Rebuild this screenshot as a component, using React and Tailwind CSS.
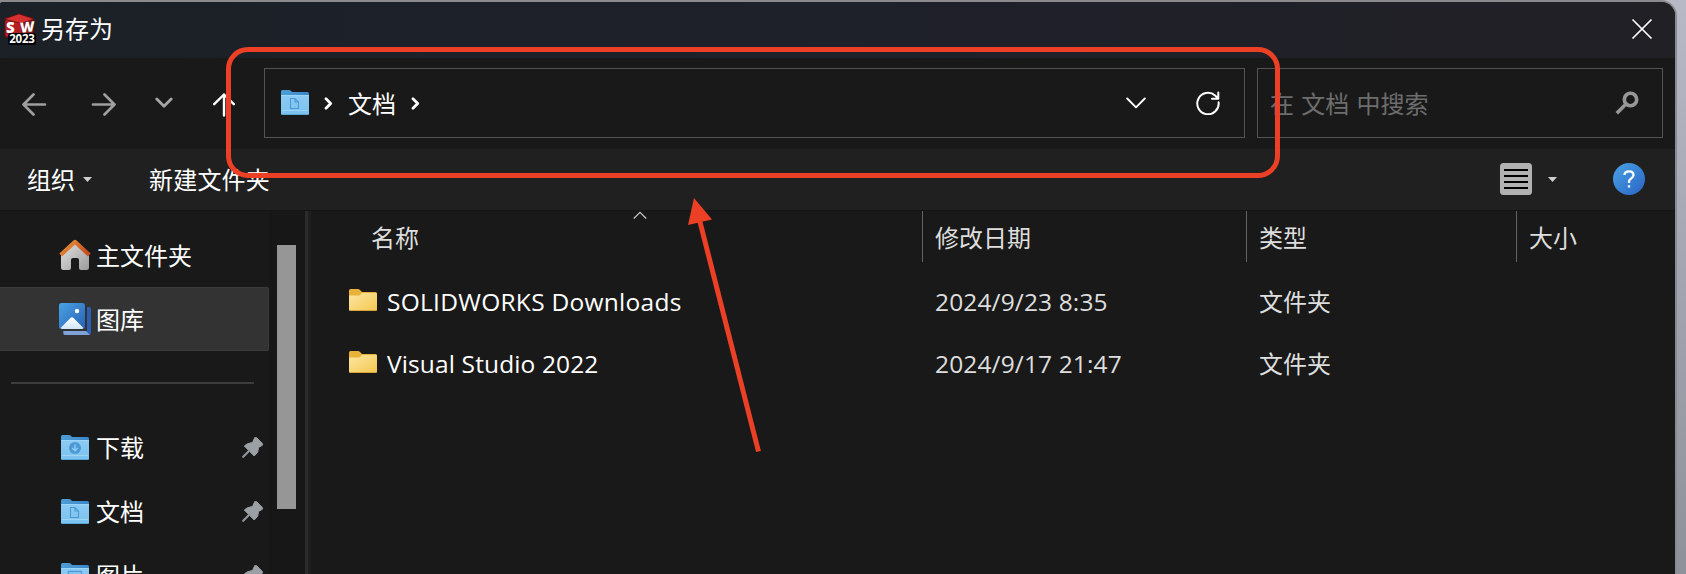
function SolidWorksLogo() {
  return (
    <span className="relative block h-8 w-8 shrink-0">
      <svg className="block h-8 w-8" viewBox="0 0 32 32">
        <path d="M.500 5 15 .500l15 4.500v18L16 27 .500 24z" fill="#5e1115" />
        <path d="M1.500 6 15 1.200l14 4.800-12 4z" fill="#d6312f" />
        <path d="M1.500 7 17 10.500V27L1.500 23z" fill="#b51f22" />
        <path d="M17 10.500 29 6.500V22L17 27z" fill="#7b1519" />
        <rect x="4" y="20" width="28" height="12" rx="3" fill="#000" />
      </svg>
      <span className="absolute left-[2px] top-[9px] h-[11px] w-[10px] font-['Open_Sans',sans-serif] text-[15px] font-extrabold leading-[11px] text-white">S</span>
      <span className="absolute left-[16px] top-[8px] h-[11px] w-[14px] -skew-y-6 font-['Open_Sans',sans-serif] text-[14px] font-extrabold leading-[11px] tracking-[-1px] text-white">W</span>
      <span className="absolute left-[5px] top-[20px] flex h-[12px] w-[26px] items-center justify-center bg-black font-['Open_Sans',sans-serif] text-[11.500px] font-bold leading-[12px] tracking-[-0.200px] text-white">2023</span>
    </span>
  );
}

function BlueFolder({ kind }) {
  return (
    <svg className="block h-[25px] w-7 shrink-0" viewBox="0 0 28 25">
      <defs>
        <linearGradient id={`front-${kind}`} x1="0" y1="0" x2="0" y2="1">
          <stop offset="0" stopColor="#8ccbf4" />
          <stop offset="1" stopColor="#7ac2ee" />
        </linearGradient>
        <linearGradient id={`back-${kind}`} x1="0" y1="0" x2="1" y2="0">
          <stop offset="0" stopColor="#4c9ed4" />
          <stop offset="1" stopColor="#3c85c8" />
        </linearGradient>
      </defs>
      <path d="M0 1.500Q0 0 1.500 0H8q1.200 0 2 .900L11.200 2H26.500Q28 2 28 3.500V12H0z" fill={`url(#back-${kind})`} />
      <path d="M0 5H28V23.500Q28 25 26.500 25H1.500Q0 25 0 23.500z" fill={`url(#front-${kind})`} />
      <path d="M0 5.500H28" stroke="#9bd5f7" />
      <path d="M1 20.500H27" stroke="#9dd5f5" />
      <path d="M1 24.500H27" stroke="#58a8d8" />
      {kind.startsWith("doc") && (
        <path d="M9.500 8.500h4.500l3.500 3.500v6.500h-8zM14 8.500V12h3.500" fill="none" stroke="#4c99d6" strokeWidth="1.100" />
      )}
      {kind === "down" && (
        <>
          <circle cx="14" cy="13" r="6" fill="#4d99d6" />
          <path d="M14 9.500v6M11.200 13l2.800 2.800L16.800 13" fill="none" stroke="#8ccbf4" strokeWidth="1.500" />
        </>
      )}
      {kind === "pic" && (
        <>
          <rect x="7.500" y="8.500" width="13" height="10" fill="none" stroke="#4c99d6" strokeWidth="1.300" />
          <circle cx="11" cy="11.500" r="1" fill="#4c99d6" />
          <path d="m9 18 4-4 4 4" fill="none" stroke="#4c99d6" />
        </>
      )}
    </svg>
  );
}

function YellowFolder() {
  return (
    <svg className="block h-[22px] w-7 shrink-0" viewBox="0 0 28 22">
      <defs>
        <linearGradient id="yf" x1="0" y1="0" x2="1" y2="1">
          <stop offset="0" stopColor="#fce6a2" />
          <stop offset="1" stopColor="#f4c850" />
        </linearGradient>
      </defs>
      <path d="M0 1.500Q0 0 1.500 0H9q1 0 1.800.800L13 3H26.500Q28 3 28 4.500V10H0z" fill="#e8b13a" />
      <path d="M0 6.500H9.500Q10.500 6.500 11.300 5.800L13 4H27q1 0 1 1V20.500Q28 22 26.500 22H1.500Q0 22 0 20.500z" fill="url(#yf)" />
      <path d="M1 21.500H27" stroke="#d9a53a" />
    </svg>
  );
}

function HomeIcon() {
  return (
    <svg className="block h-8 w-8" viewBox="0 0 32 32">
      <defs>
        <linearGradient id="wall" x1="0" y1="0" x2="1" y2="1">
          <stop offset="0" stopColor="#e4e4e4" />
          <stop offset="1" stopColor="#9b9b9b" />
        </linearGradient>
        <linearGradient id="roof" x1="0" y1="0" x2="1" y2="0.500">
          <stop offset="0" stopColor="#eb9a3a" />
          <stop offset="1" stopColor="#c94f20" />
        </linearGradient>
      </defs>
      <path d="M2 14 16 2 30 14V28.500q0 2.500-2.500 2.500H22q-2 0-2-2v-8q0-2-2-2h-4q-2 0-2 2v8q0 2-2 2H4.500Q2 31 2 28.500z" fill="url(#wall)" />
      <path d="M1.700 16 16 2.800 30.300 16" fill="none" stroke="url(#roof)" strokeWidth="4" strokeLinejoin="round" />
    </svg>
  );
}

function GalleryIcon() {
  return (
    <svg className="block h-8 w-8" viewBox="0 0 32 32">
      <defs>
        <linearGradient id="gal" x1="0" y1="0" x2="1" y2="1">
          <stop offset="0" stopColor="#4aa3e6" />
          <stop offset="1" stopColor="#2760b4" />
        </linearGradient>
        <linearGradient id="hill" x1="0" y1="0" x2="0" y2="1">
          <stop offset="0" stopColor="#ffffff" />
          <stop offset="1" stopColor="#cfe6fb" />
        </linearGradient>
      </defs>
      <path d="M28 4h2q2 0 2 2v24q0 2-2 2H6q-2 0-2-2v-2h24z" fill="#2a5fb3" />
      <path d="M4.500 28H27l4 4H6q-2 0-1.500-4z" fill="#7fa3d6" />
      <rect width="26" height="26" rx="2.500" fill="url(#gal)" />
      <path d="m1.500 25 10-10q1.500-1.300 3 0l10 10q-.700 1-2 1h-19q-1.300 0-2-1z" fill="url(#hill)" />
      <circle cx="18" cy="8" r="2.200" fill="#fff" />
    </svg>
  );
}

function Pin() {
  return (
    <svg className="block h-[21px] w-[21px]" viewBox="0 0 21 21">
      <path d="M12.800.500q.800-.800 1.600 0l6.200 6.200q.800.800-.200 1.500L16.500 10.500l-.800 4.800-3.500 3.700L2.300 9l3.200-2.300 5-1.200z" fill="#9aa0a5" stroke="#9aa0a5" strokeLinejoin="round" />
      <path d="m7.500 13.500-6.300 6.300" stroke="#8f9599" strokeWidth="2.200" strokeLinecap="round" />
    </svg>
  );
}

function SideRow({ icon, label, pinned, active }) {
  return (
    <li className={`flex h-16 shrink-0 items-center pl-[59px] ${active ? "w-[269px] rounded-r-[2px] border border-l-0 border-[#3b3b3b] bg-[#333333]" : "w-[269px]"}`}>
      <span className="flex w-[37px] items-center">{icon}</span>
      <span className="flex-1 pt-px">{label}</span>
      {pinned && <span className="mr-[6px]"><Pin /></span>}
    </li>
  );
}

function Caret({ className }) {
  return (
    <svg className={`block h-[5px] w-[9px] ${className}`} viewBox="0 0 9 5">
      <path d="M0 0h9L4.500 5z" fill="#d0d0d0" />
    </svg>
  );
}

function Crumb({ className }) {
  return (
    <svg className={`block h-[13px] w-[9px] ${className}`} viewBox="0 0 9 13">
      <path d="m2 1.800 4.700 4.700L2 11.200" fill="none" stroke="#fff" strokeWidth="2.800" strokeLinecap="round" strokeLinejoin="round" />
    </svg>
  );
}

function TitleBar() {
  return (
    <header className="flex h-14 shrink-0 items-center bg-linear-to-r from-[#1b2127] via-[#1e202a] to-[#212025] pl-1">
      <div className="mt-[-2px]"><SolidWorksLogo /></div>
      <h1 className="ml-[5px] mt-[-3px] flex-1">另存为</h1>
      <svg className="mr-[22px] mt-[-2px] block h-[22px] w-[22px]" viewBox="0 0 22 22">
        <path d="m1.500 1.500 19 19m0-19-19 19" stroke="#fff" strokeWidth="1.700" />
      </svg>
    </header>
  );
}

function NavBar() {
  return (
    <nav className="flex h-[91px] shrink-0 items-center pb-[1px] pl-[21px] pr-3">
      <div className="flex w-[243px] items-center">
        <svg className="mt-px block h-6 w-[26px]" viewBox="0 0 26 24" fill="none" stroke="#9f9f9f" strokeWidth="2.700" strokeLinecap="round" strokeLinejoin="round">
          <path d="M24 12.500H2.500M12.500 2.500l-10 10 10 10" />
        </svg>
        <svg className="ml-[44px] mt-px block h-6 w-[26px]" viewBox="0 0 26 24" fill="none" stroke="#9f9f9f" strokeWidth="2.700" strokeLinecap="round" strokeLinejoin="round">
          <path d="M2 12.500h21.500M13.500 2.500l10 10-10 10" />
        </svg>
        <svg className="ml-[38px] block h-3 w-[18px]" viewBox="0 0 18 12" fill="none" stroke="#a5a5a5" strokeWidth="2.800" strokeLinecap="round" strokeLinejoin="round">
          <path d="m1.800 2 7.200 7.200L16.200 2" />
        </svg>
        <svg className="ml-[40px] mt-1 block h-6 w-[22px]" viewBox="0 0 22 24" fill="none" stroke="#fff" strokeWidth="2.400" strokeLinecap="round" strokeLinejoin="round">
          <path d="M11 22.500v-21M1.200 11.200 11 1.500l9.800 9.700" />
        </svg>
      </div>
      <div className="flex h-[70px] w-[981px] items-center border border-[#535353] pl-4">
        <div className="mt-[-2px]"><BlueFolder kind="doc-path" /></div>
        <Crumb className="ml-[15px]" />
        <span className="ml-[15px] pt-[2px]">文档</span>
        <Crumb className="ml-[15px]" />
        <span className="flex-1" />
        <svg className="block h-3 w-5" viewBox="0 0 20 12" fill="none" stroke="#fff" strokeWidth="1.900" strokeLinecap="round" strokeLinejoin="round">
          <path d="m1.200 1.500 8.800 8.800 8.800-8.800" />
        </svg>
        <svg className="ml-[50px] mr-[24px] mt-[-1px] block h-6 w-6" viewBox="0 0 24 24" fill="none" stroke="#fff" strokeWidth="2" strokeLinecap="round" strokeLinejoin="round">
          <path d="M22.600 11.300a10.700 10.700 0 1 1-3.500-6.700l2.900 2.700M22.300 1.500v6.300h-6.300" />
        </svg>
      </div>
      <div className="ml-3 flex h-[70px] w-[406px] items-center justify-between border border-[#535353] pl-3 pr-[23px]">
        <span className="pt-[2px] text-[#6d6d6d] [word-spacing:1px]">在 文档 中搜索</span>
        <svg className="block h-6 w-6" viewBox="0 0 24 24" fill="none" stroke="#979797">
          <circle cx="15.500" cy="8.500" r="6.200" strokeWidth="3.600" />
          <path d="M11 13 1.800 22.200" strokeWidth="3.600" />
        </svg>
      </div>
    </nav>
  );
}

function CommandBar() {
  return (
    <div className="flex h-[61px] shrink-0 items-center bg-[#202020] pb-[1px] pl-[27px] pr-[30px]">
      <span className="pt-px">组织</span>
      <Caret className="ml-2" />
      <span className="ml-[57px] flex-1 pt-px tracking-[0.200px]">新建文件夹</span>
      <svg className="block h-8 w-8" viewBox="0 0 32 32">
        <rect width="32" height="32" rx="3.500" fill="#b2b2b2" />
        <path d="M4 7h24M4 13h24M4 19h24M4 25h24" stroke="#000" strokeWidth="2" />
      </svg>
      <Caret className="ml-4" />
      <span className="ml-[56px] flex h-8 w-8 items-center justify-center rounded-full bg-linear-to-br from-[#4ba3e3] to-[#2a63c4]">
        <svg className="block h-[18px] w-3" viewBox="0 0 12 18" fill="none" stroke="#fff" strokeWidth="2.300">
          <path d="M1.500 5Q1.500 1.300 6 1.300T10.500 5Q10.500 7 8.200 8.400T6 11.500V13" />
          <path d="M6 15.200v2.300" strokeWidth="2.300" />
        </svg>
      </span>
    </div>
  );
}

function Sidebar() {
  return (
    <aside className="flex h-full w-[305px] shrink-0 overflow-hidden">
      <ul className="w-[269px] pt-3">
        <SideRow icon={<HomeIcon />} label="主文件夹" />
        <SideRow icon={<GalleryIcon />} label="图库" active />
        <li className="flex h-16 items-center pl-[11px]">
          <span className="h-[2px] w-[243px] bg-[#3c3c3c]" />
        </li>
        <SideRow icon={<span className="ml-[2px]"><BlueFolder kind="down" /></span>} label="下载" pinned />
        <SideRow icon={<span className="ml-[2px]"><BlueFolder kind="doc-side" /></span>} label="文档" pinned />
        <SideRow icon={<span className="ml-[2px]"><BlueFolder kind="pic" /></span>} label="图片" pinned />
      </ul>
      <div className="flex-1 bg-[#171717] pl-2 pt-[34px]">
        <div className="h-[264px] w-[19px] bg-[#969696]" />
      </div>
    </aside>
  );
}

const rows = [
  { name: "SOLIDWORKS Downloads", date: "2024/9/23 8:35", type: "文件夹", fit: "tracking-[0.270px]" },
  { name: "Visual Studio 2022", date: "2024/9/17 21:47", type: "文件夹", fit: "tracking-[0.130px]" },
];

function FileList() {
  return (
    <main className="flex-1 text-[#dedede]">
      <div className="grid h-[51px] grid-cols-[611px_324px_270px_1fr]">
        <div className="relative flex items-center pl-[60px] pt-[2px]">
          名称
          <svg className="absolute left-[322px] top-0 block h-2 w-[14px]" viewBox="0 0 14 8">
            <path d="m.800 7.500 6.200-6.200 6.200 6.200" fill="none" stroke="#c4c4c4" strokeWidth="1.300" />
          </svg>
        </div>
        <div className="flex items-center border-l border-[#636363] pl-3 pt-[2px]">修改日期</div>
        <div className="flex items-center border-l border-[#636363] pl-3 pt-[2px]">类型</div>
        <div className="flex items-center border-l border-[#636363] pl-3 pt-[2px]">大小</div>
      </div>
      <div className="pt-[9px]">
        {rows.map((row) => (
          <div key={row.name} className="grid h-[62px] grid-cols-[611px_324px_270px_1fr] items-center">
            <div className="flex items-center gap-[10px] pl-[38px]">
              <div className="mt-[-4px]"><YellowFolder /></div>
              <span className={`text-[24.500px] text-white ${row.fit}`}>{row.name}</span>
            </div>
            <div className="pl-[13px] text-[24.500px] tracking-[0.130px]">{row.date}</div>
            <div className="pl-[13px]">{row.type}</div>
          </div>
        ))}
      </div>
    </main>
  );
}

export default function App() {
  return (
    <div className="relative h-[574px] w-[1686px] overflow-hidden bg-linear-to-b from-[#b7bac6] to-[#8d9199] font-['Open_Sans','Noto_Sans_CJK_SC',sans-serif] text-[24px] leading-[32px] text-white">
      <div className="flex h-full w-[1677px] flex-col rounded-tr-[16px] bg-[#8b8b8f] pr-[2px] pt-[2px]">
        <div className="flex min-h-0 flex-1 flex-col overflow-hidden rounded-tl-[3px] rounded-tr-[14px] bg-[#191919]">
          <TitleBar />
          <NavBar />
          <CommandBar />
          <div className="flex min-h-0 flex-1 border-t border-[#151515]">
            <Sidebar />
            <div className="h-full w-[3px] bg-[#2b2b2b]" />
            <div className="h-full w-[3px] bg-[#1f1f1f]" />
            <FileList />
          </div>
        </div>
      </div>
      <div className="absolute left-[226px] top-[47px] h-[131px] w-[1054px] rounded-[22px] border-[5px] border-[#eb4025]" />
      <svg className="absolute left-[680px] top-[190px] block h-[270px] w-[90px]" viewBox="0 0 90 270">
        <path d="M19 28 78.500 261.500" stroke="#eb4025" strokeWidth="5" />
        <path d="M14 8 32 29.500 8 35z" fill="#eb4025" />
      </svg>
    </div>
  );
}
